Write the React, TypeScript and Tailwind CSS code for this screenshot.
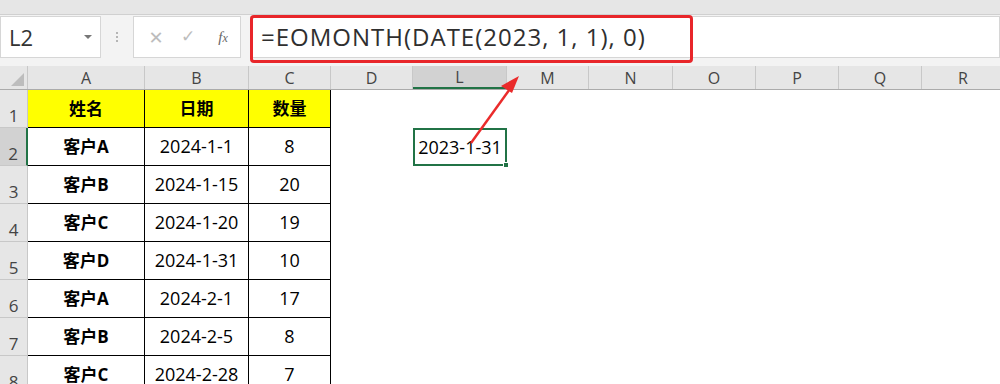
const cols = [
  { key: 'A', w: 'w-[117px]' },
  { key: 'B', w: 'w-[104px]' },
  { key: 'C', w: 'w-[82px]' },
  { key: 'D', w: 'w-[82px]' },
  { key: 'L', w: 'w-[94px]' },
  { key: 'M', w: 'w-[82px]' },
  { key: 'N', w: 'w-[84px]' },
  { key: 'O', w: 'w-[83px]' },
  { key: 'P', w: 'w-[83px]' },
  { key: 'Q', w: 'w-[83px]' },
  { key: 'R', w: 'w-[83px]' },
];

const rows = [
  ['客户A', '2024-1-1', '8'],
  ['客户B', '2024-1-15', '20'],
  ['客户C', '2024-1-20', '19'],
  ['客户D', '2024-1-31', '10'],
  ['客户A', '2024-2-1', '17'],
  ['客户B', '2024-2-5', '8'],
  ['客户C', '2024-2-28', '7'],
];

const font = "font-['Open_Sans','Noto_Sans_CJK_SC',sans-serif]";

function FormulaBar() {
  return (
    <div className="relative h-[51px] flex items-start pt-px bg-[#f3f3f3]">
      {/* name box */}
      <div className="w-[101px] h-[42px] bg-white border border-[#d6d6d6] flex items-center pl-2 pr-2">
        <span className={`flex-1 text-[22px] text-[#333] ${font}`}>L2</span>
        <span className="w-0 h-0 border-x-[4px] border-x-transparent border-t-[4px] border-t-[#777]" />
      </div>
      <div className="w-[32px] h-[42px] flex flex-col items-center justify-center gap-[2px]">
        <span className="w-[2px] h-[2px] bg-[#b5b5b5]" />
        <span className="w-[2px] h-[2px] bg-[#b5b5b5]" />
        <span className="w-[2px] h-[2px] bg-[#b5b5b5]" />
      </div>
      <div className="w-[108px] h-[42px] bg-white border border-[#d6d6d6] flex items-center text-[#bdbdbd]">
        <span className="w-[36px] text-center text-[18px] font-['DejaVu_Sans',sans-serif] pl-2">✕</span>
        <span className="w-[36px] text-center text-[17px] font-['DejaVu_Sans',sans-serif]">✓</span>
        <span className="w-[34px] text-center text-[15px] italic text-[#666] font-['Liberation_Serif',serif]">
          f<span className="text-[12px]">x</span>
        </span>
      </div>
      <div className="ml-[9px] flex-1 h-[42px] bg-white border border-[#d6d6d6] flex items-center pl-[10px]">
        <span className={`text-[24px] tracking-[1px] text-[#2f2f2f] ${font}`}>=EOMONTH(DATE(2023, 1, 1), 0)</span>
      </div>
      {/* red highlight */}
      <div className="absolute left-[250px] top-0 w-[443px] h-[48px] border-[3px] border-[#e8262a] rounded-[4px]" />
    </div>
  );
}

export default function App() {
  return (
    <div className="w-[1000px] h-[384px] overflow-hidden bg-white relative">
      <div className="h-[15px] bg-[#e6e6e6] border-b border-[#d0d0d0]" />
      <FormulaBar />
      {/* column header */}
      <div className="flex h-[24px] bg-[#e6e6e6] border-b border-[#ababab]">
        <div className="w-[28px] shrink-0 border-r border-[#c8c8c8] flex items-end justify-end pr-[3px] pb-[3px]">
          <span className="w-0 h-0 border-l-[13px] border-l-transparent border-b-[13px] border-b-[#bdbdbd]" />
        </div>
        {cols.map((c) => (
          <div
            key={c.key}
            className={`${c.w} shrink-0 border-r border-[#c8c8c8] flex items-center justify-center text-[16px] text-[#444] ${font} ${
              c.key === 'L' ? 'bg-[#d2d2d2] border-b-2 border-b-[#217346]' : ''
            }`}
          >
            {c.key}
          </div>
        ))}
      </div>
      {/* rows */}
      {[null, ...rows].map((r, i) => {
        const n = i + 1;
        const isHead = i === 0;
        const cells = isHead ? ['姓名', '日期', '数量'] : r!;
        return (
          <div key={n} className="flex h-[38px]">
            <div
              className={`w-[28px] shrink-0 border-b border-[#c8c8c8] flex items-end justify-center text-[17px] leading-[22px] text-[#444] ${font} ${
                n === 2 ? 'bg-[#d2d2d2] border-r-2 border-r-[#217346]' : 'bg-[#e6e6e6] border-r border-r-[#c8c8c8]'
              }`}
            >
              {n}
            </div>
            {cells.map((t, j) => (
              <div
                key={j}
                className={`${cols[j].w} shrink-0 border-r border-b border-black flex items-center justify-center text-black ${font} ${
                  isHead ? 'bg-[#ffff00] font-bold text-[17px]' : j === 0 ? 'font-bold text-[17px]' : 'text-[18px]'
                }`}
              >
                {t}
              </div>
            ))}
            <div className="w-[82px] shrink-0" />
            <div className="w-[94px] shrink-0 relative">
              {n === 2 && (
                <div className="absolute inset-0 border-2 border-[#217346] flex items-center justify-center">
                  <span className={`text-[18px] text-black ${font}`}>2023-1-31</span>
                  <span className="absolute right-[-4px] bottom-[-4px] w-[6px] h-[6px] bg-[#217346] border border-white" />
                </div>
              )}
            </div>
          </div>
        );
      })}
      {/* arrow annotation */}
      <svg className="absolute left-0 top-0 pointer-events-none" width="1000" height="384">
        <line x1="471" y1="143" x2="512" y2="86" stroke="#ea2b2b" strokeWidth="2.5" />
        <polygon points="519,76 501,86 512,93" fill="#ea2b2b" />
      </svg>
    </div>
  );
}
